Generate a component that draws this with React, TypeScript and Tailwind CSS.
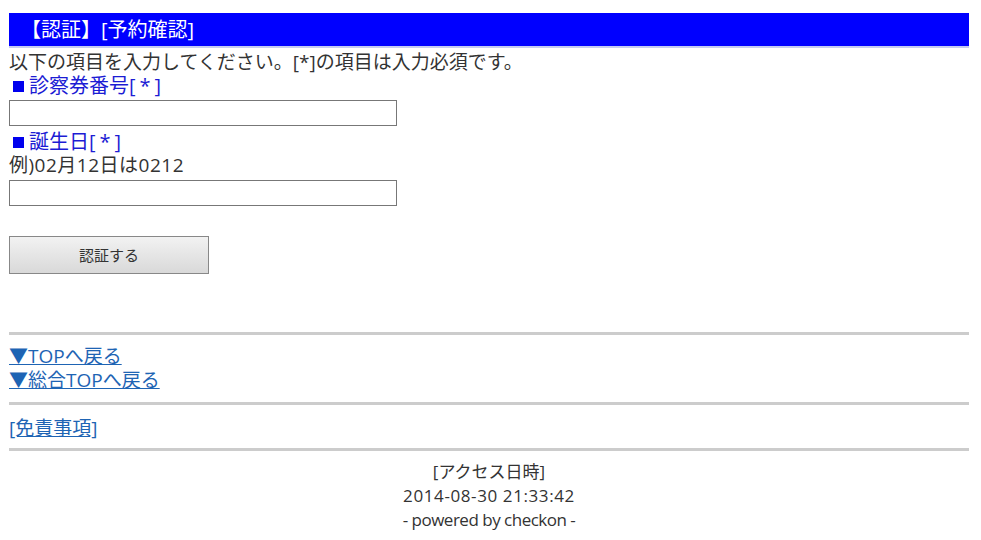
import React from "react";

export default function App() {
  const font = { fontFamily: '"Open Sans", "Noto Sans CJK JP", "Noto Sans", sans-serif' };
  return (
    <div className="min-h-[540px] bg-white pl-[9px] pr-[12px] pt-[13px] text-[#333]" style={font}>
      <div className="flex h-[35px] items-center border-b-2 border-[#c4cbf2] bg-[#0000ff] pl-[12px] text-[20px] leading-none text-white">
        【認証】[予約確認]
      </div>
      <div className="mt-[2px] text-[19px] leading-[24px] text-[#333]">
        以下の項目を入力してください。[*]の項目は入力必須です。
      </div>
      <div className="flex items-center pl-[4px] text-[20px] leading-[24px] text-[#1c1cd4]">
        <span className="mr-[5px] inline-block h-[11px] w-[11px] bg-[#0000ee]" />
        <span>診察券番号</span>
        <span className="tracking-[4px]">[*]</span>
      </div>
      <input className="mt-[2px] block h-[26px] w-[388px] border border-[#777] bg-white" />
      <div className="mt-[4px] flex items-center pl-[4px] text-[20px] leading-[24px] text-[#1c1cd4]">
        <span className="mr-[5px] inline-block h-[11px] w-[11px] bg-[#0000ee]" />
        <span>誕生日</span>
        <span className="tracking-[4px]">[*]</span>
      </div>
      <div className="text-[19px] leading-[22px] tracking-[0.5px] text-[#333]">例)02月12日は0212</div>
      <input className="mt-[4px] block h-[26px] w-[388px] border border-[#777] bg-white" />
      <button className="mt-[30px] block h-[38px] w-[200px] border border-[#888] bg-gradient-to-b from-[#f2f2f2] to-[#d9d9d9] text-[15px] text-[#333]">
        認証する
      </button>
      <div className="mt-[58px] h-[3px] bg-[#cccccc]" />
      <div className="mt-[9px] flex flex-col items-start text-[19px] leading-[24px]">
        <a href="#" className="text-[#1e64b4] underline">▼TOPへ戻る</a>
        <a href="#" className="text-[#1e64b4] underline">▼総合TOPへ戻る</a>
      </div>
      <div className="mt-[10px] h-[3px] bg-[#cccccc]" />
      <div className="mt-[11px] text-[19px] leading-[24px]">
        <a href="#" className="text-[#1e64b4] underline">[免責事項]</a>
      </div>
      <div className="mt-[8px] h-[3px] bg-[#cccccc]" />
      <div className="mt-[9px] text-center text-[17px] leading-[24px] text-[#333]">
        <div>[アクセス日時]</div>
        <div className="tracking-[0.6px]">2014-08-30 21:33:42</div>
        <div className="tracking-[-0.5px]">- powered by checkon -</div>
      </div>
    </div>
  );
}
